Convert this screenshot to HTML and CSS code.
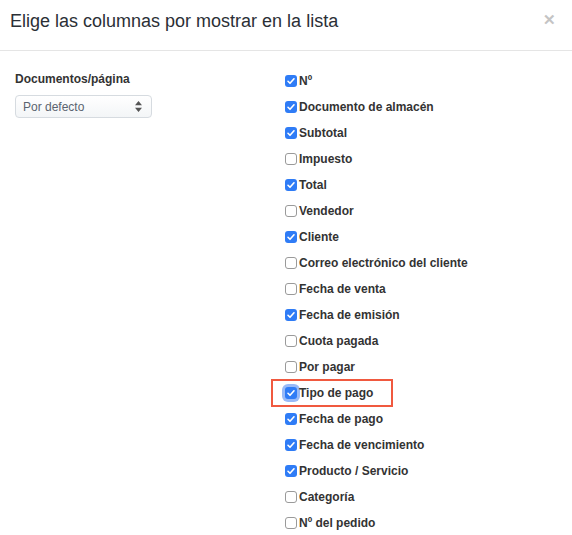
FILE: index.html
```html
<!DOCTYPE html>
<html>
<head>
<meta charset="utf-8">
<link rel="stylesheet" href="styles.css">
</head>
<body>
<div class="modal">
  <div class="modal-header">
    <h4 class="modal-title">Elige las columnas por mostrar en la lista</h4>
    <span class="close">&#x2715;</span>
  </div>
  <div class="modal-body">
    <div class="left-col">
      <div class="field-label">Documentos/página</div>
      <div class="select">
        <span>Por defecto</span>
        <svg class="arrows" width="7" height="11" viewBox="0 0 7 11"><path d="M3.5 0 L7 4.3 L0 4.3 Z M3.5 11 L7 6.7 L0 6.7 Z" fill="#555"/></svg>
      </div>
    </div>
    <div class="right-col">
      <div class="row"><span class="cb on"></span>Nº</div>
      <div class="row"><span class="cb on"></span>Documento de almacén</div>
      <div class="row"><span class="cb on"></span>Subtotal</div>
      <div class="row"><span class="cb"></span>Impuesto</div>
      <div class="row"><span class="cb on"></span>Total</div>
      <div class="row"><span class="cb"></span>Vendedor</div>
      <div class="row"><span class="cb on"></span>Cliente</div>
      <div class="row"><span class="cb"></span>Correo electrónico del cliente</div>
      <div class="row"><span class="cb"></span>Fecha de venta</div>
      <div class="row"><span class="cb on"></span>Fecha de emisión</div>
      <div class="row"><span class="cb"></span>Cuota pagada</div>
      <div class="row"><span class="cb"></span>Por pagar</div>
      <div class="row highlight"><span class="cb on focus"></span>Tipo de pago</div>
      <div class="row"><span class="cb on"></span>Fecha de pago</div>
      <div class="row"><span class="cb on"></span>Fecha de vencimiento</div>
      <div class="row"><span class="cb on"></span>Producto / Servicio</div>
      <div class="row"><span class="cb"></span>Categoría</div>
      <div class="row"><span class="cb"></span>Nº del pedido</div>
    </div>
  </div>
</div>
</body>
</html>
```
FILE: styles.css
```css
* { box-sizing: border-box; }
body {
  margin: 0;
  background: #fff;
  font-family: "Liberation Sans", Arial, sans-serif;
  color: #333;
}
.modal { width: 572px; }
.modal-header {
  height: 51px;
  border-bottom: 1px solid #e5e5e5;
  display: flex;
  align-items: center;
  justify-content: space-between;
  padding: 0 16px 0 10px;
}
.modal-title {
  margin: 0;
  font-size: 18px;
  font-weight: normal;
  color: #2b2f36;
  position: relative;
  top: -4px;
}
.close {
  color: #c4c4c4;
  font-size: 15px;
  font-weight: bold;
  position: relative;
  top: -5px;
}
.modal-body {
  display: flex;
  padding: 20px 0 0 15px;
}
.left-col { width: 270px; }
.field-label {
  font-size: 12px;
  font-weight: bold;
  color: #333;
  line-height: 14px;
  margin-top: 1px;
}
.select {
  margin-top: 9px;
  width: 137px;
  height: 23px;
  border: 1px solid #d6dbe0;
  border-radius: 4px;
  background: linear-gradient(#ffffff, #f3f5f7);
  display: flex;
  align-items: center;
  justify-content: space-between;
  padding: 0 9px 0 7px;
  font-size: 12px;
  color: #5b6470;
}
.right-col {
  display: flex;
  flex-direction: column;
  margin-top: -3px;
}
.row {
  height: 26px;
  display: flex;
  align-items: center;
  font-size: 12px;
  font-weight: bold;
  color: #333;
}
.cb {
  width: 12px;
  height: 12px;
  border: 1px solid #9a9a9a;
  border-radius: 3px;
  background: #fff;
  margin-right: 2px;
  flex: none;
}
.cb.on {
  border: none;
  background: #2f7cf6 url("data:image/svg+xml;utf8,<svg xmlns='http://www.w3.org/2000/svg' width='12' height='12' viewBox='0 0 12 12'><path d='M3 6.3 L5 8.3 L9 3.8' fill='none' stroke='white' stroke-width='1.6' stroke-linecap='round' stroke-linejoin='round'/></svg>") no-repeat center;
}
.cb.focus {
  box-shadow: 0 0 0 3px rgba(70, 130, 240, 0.55);
}
.highlight {
  outline: 2px solid #f0593f;
  outline-offset: 0;
  margin-left: -12px;
  padding-left: 12px;
  width: 118px;
  height: 24px;
  margin-top: 1px;
  margin-bottom: 1px;
}
```
